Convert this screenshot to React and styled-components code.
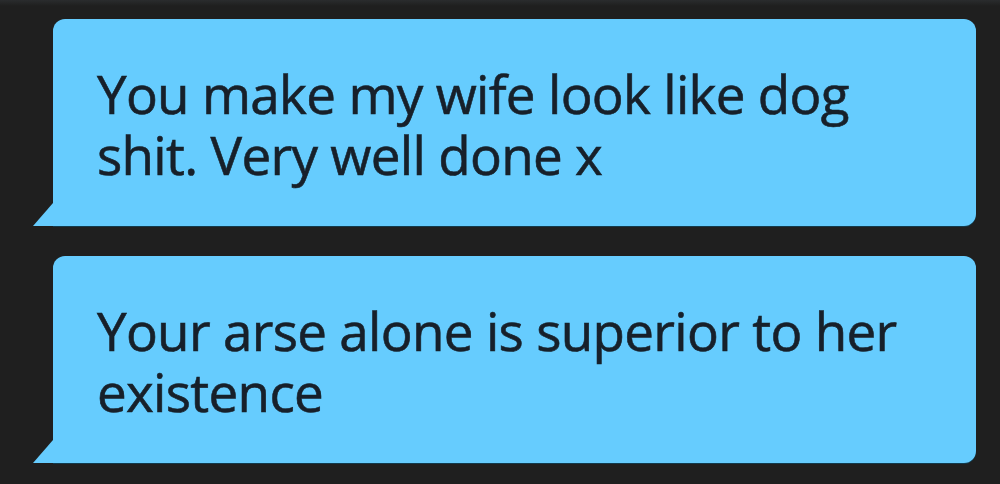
import React from "react";
import styled, { createGlobalStyle } from "styled-components";

const GlobalStyle = createGlobalStyle`
  html, body {
    margin: 0;
    padding: 0;
    background: #1f1f1f;
  }
`;

const messages = [
  "You make my wife look like dog shit. Very well done x",
  "Your arse alone is superior to her existence",
];

const Thread = styled.div`
  display: flex;
  flex-direction: column;
  gap: 30px;
  padding: 19px 24px 21px 53px;
  min-height: 484px;
  box-sizing: border-box;
  background: linear-gradient(#2a2c2e 0px, #1f1f1f 6px);
`;

const Bubble = styled.div`
  position: relative;
  height: 207px;
  box-sizing: border-box;
  padding: 44px 40px 0 44px;
  background: #66ccfe;
  border-radius: 12px 12px 12px 0;
  box-shadow: 0 1px 0 #123a4c;
  color: #17202a;
  font-family: "Open Sans", "Noto Sans", sans-serif;
  font-size: 53px;
  line-height: 61px;
  letter-spacing: -0.7px;
  -webkit-text-stroke: 0.6px #17202a;

  &::before {
    content: "";
    position: absolute;
    left: -20px;
    bottom: 0;
    width: 20px;
    height: 23px;
    background: #66ccfe;
    clip-path: polygon(100% 0, 100% 100%, 0 100%);
  }
`;

export default function App() {
  return (
    <>
      <GlobalStyle />
      <Thread>
        {messages.map((text) => (
          <Bubble key={text}>{text}</Bubble>
        ))}
      </Thread>
    </>
  );
}
